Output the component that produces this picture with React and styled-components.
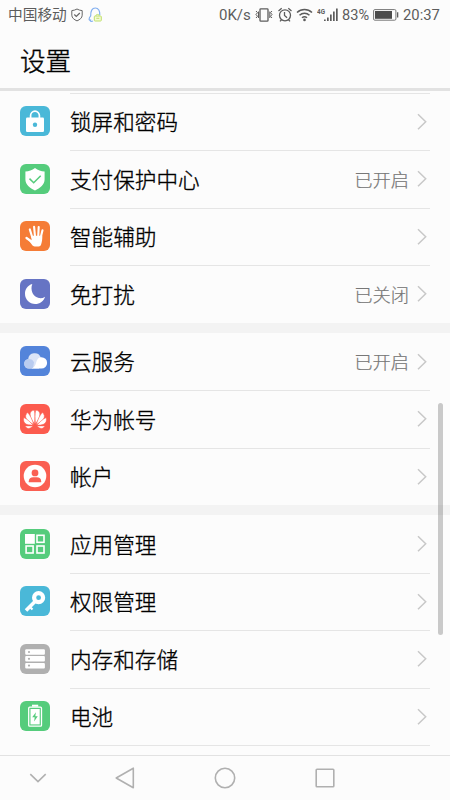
import React from 'react'
import styled, {createGlobalStyle} from 'styled-components'

const GlobalStyle = createGlobalStyle`
  * {
    box-sizing: border-box;
  }
  body {
    margin: 0;
    background: #fcfcfc;
    font-family: Roboto, 'Noto Sans CJK SC', sans-serif;
  }
  svg {
    display: block;
    flex-shrink: 0;
  }
`

const Screen = styled.div`
  position: relative;
  display: flex;
  flex-direction: column;
  width: 450px;
  height: 800px;
  overflow: hidden;
  background: #fcfcfc;
`

const StatusBar = styled.div`
  display: flex;
  align-items: center;
  justify-content: space-between;
  height: 31px;
  padding: 0 10px 1px 8px;
  color: #5c5c5c;
`

const StatusGroup = styled.div`
  display: flex;
  align-items: center;
  gap: ${props => props.$gap}px;
`

const StatusText = styled.span`
  width: ${props => props.$width}px;
  font-size: ${props => props.$size || 14.5}px;
  line-height: 30px;
  white-space: nowrap;
`

const Signal = styled.div`
  display: flex;
  margin: 0 -1px 0 0;
`

const Title = styled.h1`
  height: 57px;
  margin: 0;
  padding-left: 20px;
  border-bottom: 3px solid #e2e2e2;
  box-sizing: content-box;
  font-size: 25.6px;
  font-weight: 300;
  line-height: 62px;
  color: #000;
  -webkit-text-stroke: 0.4px #000;
`

const List = styled.div`
  display: flex;
  flex-direction: column;
  gap: 10px;
  height: 664px;
  padding-top: 1.5px;
  overflow: hidden;
  background: #fcfcfc;
`

const Group = styled.div`
  flex-shrink: 0;
  & + & {
    box-shadow: 0 -10px 0 #f3f3f3;
  }
`

const Row = styled.div`
  display: flex;
  align-items: center;
  height: 57.5px;
  padding-left: 20px;
`

const RowBody = styled.div`
  display: flex;
  flex: 1;
  align-items: center;
  height: 100%;
  margin: 0 20px;
  padding-right: 3px;
  border-top: 1px solid ${props => props.$line ? '#e5e5e5' : 'transparent'};
`

const Label = styled.span`
  flex: 1;
  padding-top: 3px;
  font-size: 21.6px;
  font-weight: 300;
  line-height: 32px;
  color: #000;
  -webkit-text-stroke: 0.35px #000;
`

const Value = styled.span`
  margin-right: 8px;
  padding-top: 3px;
  font-size: 18.3px;
  font-weight: 300;
  line-height: 28px;
  color: #777;
  -webkit-text-stroke: 0.2px #777;
`

const Tile = styled.div`
  width: 30px;
  height: 30px;
  border-radius: 6px;
  background: ${props => props.$color};
`

const Scrollbar = styled.div`
  position: absolute;
  top: 403px;
  right: 7.5px;
  width: 5px;
  height: 232px;
  border-radius: 3px;
  background: rgba(0, 0, 0, 0.2);
`

const NavBar = styled.div`
  display: grid;
  grid-template-columns: 75px 100px 100px 100px;
  align-items: center;
  justify-items: center;
  height: 45px;
  border-top: 1px solid #e2e2e2;
  background: #fcfcfc;
`

const icons = {
  lock: (
    <g>
      <path d="M10.6 12V9.6a4.4 4.4 0 0 1 8.8 0V12" fill="none" stroke="#fff" strokeWidth="1.7" />
      <rect x="6" y="11.6" width="18" height="14.4" rx="1.2" fill="#fff" />
      <circle cx="15" cy="18.7" r="2.2" fill="#4ab8d8" />
    </g>
  ),
  shield: (
    <g>
      <path d="M15 4c3 2.4 6 3.3 9.6 3.6v7.8c0 5-4.4 8.6-9.6 11-5.2-2.4-9.6-6-9.6-11V7.600C9 7.300 12 6.400 15 4z" fill="#fff" />
      <path d="M9.500 14.600l4.200 4.200 7-7" fill="none" stroke="#55cc7c" strokeWidth="1.500" />
    </g>
  ),
  hand: (
    <g stroke="#fff" strokeLinecap="round" fill="none">
      <path d="M12.300 16.500L9.800 8.400M15 15.500L14.100 5.900M18.200 15.500L18.700 6M20.600 17L22.500 9.200" strokeWidth="2.100" />
      <path d="M12.500 21.200L6.500 17" strokeWidth="2.300" />
      <path d="M11.300 14.700h11c.1 3.500-.3 6.300-1.200 8.800-.4 1.300-1.100 1.900-2.500 1.900h-3.800c-1.500 0-2.300-.8-3.200-2.100L8.400 19l3.200.4z" fill="#fff" stroke="none" />
    </g>
  ),
  moon: (
    <path d="M12.300 5.100C7.600 6.400 5 10.400 5 14.800 5 20.700 9.500 25 15.200 25c4.600 0 8.600-2.800 9.900-7.300-2 1.300-4.100 1.800-6.200 1.400-5.800-1-9-8-6.600-14z" fill="#fff" />
  ),
  cloud: (
    <g>
      <path d="M9 22.600a4.800 4.800 0 0 1-.8-9.500 6.500 6.500 0 0 1 12.600-1.600L19 22.600z" fill="#dbe5f7" />
      <path d="M8.700 13c2.800 0 4.400 1.200 5.300 3.300l-1 6.300H9A4.800 4.800 0 0 1 8.700 13z" fill="#b9ccf0" />
      <path d="M11.500 22.600c3.200-1.200 4-3.300 4.700-6.300.7-3.200 2.700-5.100 5.200-5.100a5.700 5.700 0 0 1 0 11.400z" fill="#fff" />
    </g>
  ),
  huawei: (
    <g fill="#fff" stroke="#fc5b4e" strokeWidth=".5">
      {[false, true].map(flip => (
        <g key={String(flip)} transform={flip ? 'translate(30 0) scale(-1 1)' : undefined}>
          <path d="M14.500 19.800C15 14 15.200 10 14.300 6.300 11.500 6.300 9.800 8.200 10.200 11c.3 2.900 2 5.800 4.300 8.800z" />
          <path d="M13.700 20.400C12.300 15.800 10.300 11.600 7.800 8.600 5.400 10.200 5 12.700 6.500 15c1.500 2.300 4.200 3.800 7.200 5.400z" />
          <path d="M13.200 21.200C10.300 18.100 7.400 15.300 3.900 13.500c-1 2.900.1 5.700 2.700 6.800 1.900.7 4.100.9 6.600.9z" />
          <path d="M12.900 22c-2.600-.2-5-.1-7.900 0 1.400 2.300 3.400 3 5.300 2 1.100-.5 1.900-1.200 2.600-2z" />
        </g>
      ))}
    </g>
  ),
  account: (
    <g>
      <circle cx="15" cy="15" r="11.300" fill="#fff" />
      <circle cx="15" cy="11.900" r="3.400" fill="#fa5f52" />
      <path d="M8.800 21.200v-1c0-2.800 1.900-4 4.300-4h3.800c2.400 0 4.300 1.200 4.300 4v1z" fill="#fa5f52" />
    </g>
  ),
  apps: (
    <g fill="none" stroke="#fff" strokeWidth="1.600">
      <rect x="5.800" y="5.800" width="8.200" height="8.200" fill="#fff" />
      <rect x="17" y="6.300" width="7" height="7" />
      <rect x="6.100" y="17" width="7" height="7" />
      <rect x="17" y="17" width="7" height="7" />
    </g>
  ),
  key: (
    <g fill="none" stroke="#fff">
      <circle cx="18.600" cy="11.700" r="4.500" strokeWidth="4.200" />
      <path d="M15 15.500L6 24.500" strokeWidth="3.600" />
      <path d="M9.500 20.500l3 3" strokeWidth="2.200" />
    </g>
  ),
  storage: (
    <g>
      {[5.3, 12.1, 18.900].map(y => (
        <g key={y}>
          <rect x="5.200" y={y} width="19.700" height="5.500" rx="1" fill="#fff" />
          <circle cx="9" cy={y + 2.7} r="1.100" fill="#b0b0b0" />
        </g>
      ))}
    </g>
  ),
  battery: (
    <g>
      <path d="M12 3.700h6.200v2h-6.200z" fill="#fff" />
      <rect x="8.700" y="6.200" width="12.800" height="19" rx="1" fill="none" stroke="#fff" strokeWidth="1.300" />
      <rect x="10.500" y="8" width="9.200" height="15.400" fill="#fff" />
      <path d="M15.900 11.300l-3.700 5h2.500l-.6 4.200 3.700-5.300h-2.500z" fill="#55cc7c" />
    </g>
  )
}

const groups = [
  [
    {label: '锁屏和密码', icon: 'lock', color: '#4ab8d8', line: true},
    {label: '支付保护中心', icon: 'shield', color: '#55cc7c', value: '已开启'},
    {label: '智能辅助', icon: 'hand', color: '#f57c36'},
    {label: '免打扰', icon: 'moon', color: '#6674c4', value: '已关闭'}
  ],
  [
    {label: '云服务', icon: 'cloud', color: '#5384da', value: '已开启'},
    {label: '华为帐号', icon: 'huawei', color: '#fc5b4e'},
    {label: '帐户', icon: 'account', color: '#fa5f52'}
  ],
  [
    {label: '应用管理', icon: 'apps', color: '#55cc7c'},
    {label: '权限管理', icon: 'key', color: '#4ab8d8'},
    {label: '内存和存储', icon: 'storage', color: '#b0b0b0'},
    {label: '电池', icon: 'battery', color: '#55cc7c'}
  ]
]

const Chevron = () => (
  <svg width="10" height="18" viewBox="0 0 10 18" fill="none" stroke="#c8c8c8" strokeWidth="1.500">
    <path d="M1 1.200L8.700 8.700 1 16.200" />
  </svg>
)

const Item = ({item, line}) => (
  <Row>
    <Tile $color={item.color}>
      <svg width="30" height="30" viewBox="0 0 30 30">{icons[item.icon]}</svg>
    </Tile>
    <RowBody $line={line}>
      <Label>{item.label}</Label>
      {item.value && <Value>{item.value}</Value>}
      <Chevron />
    </RowBody>
  </Row>
)

const Status = () => (
  <StatusBar>
    <StatusGroup $gap={4}>
      <StatusText $width={59} $size={14.7}>中国移动</StatusText>
      <svg width="12" height="14" viewBox="0 0 12 14" fill="none" stroke="#666" strokeWidth="1">
        <path d="M6 1c1.700 1 3.200 1.400 5.200 1.600v4.600c0 2.700-2.300 4.400-5.200 5.700C3.100 11.600.8 9.900.8 7.200V2.600C2.800 2.400 4.300 2 6 1z" />
        <path d="M3.300 6.500l2 2 3.500-3.500" strokeWidth="1.200" />
      </svg>
      <svg width="15" height="16" viewBox="0 0 15 16" fill="none">
        <path d="M6 14c-1.500.6-3 .3-2.600-.9-1.500.5-2-1.700.3-4.200C3.500 4 5.100 1 8.300 1s4.700 2.900 4.500 7" stroke="#82aff0" strokeWidth="1.200" />
        <rect x="7.300" y="9" width="7" height="5" rx=".8" fill="#f5f9d5" stroke="#bfe06c" />
        <path d="M8.800 8.800c0-1.800 3.500-1.800 3.500 0M9.300 11.300h3" stroke="#bfe06c" />
      </svg>
    </StatusGroup>
    <StatusGroup $gap={4}>
      <StatusText $width={32} $size={15}>0K/s</StatusText>
      <svg width="18" height="16" viewBox="0 0 18 16" fill="none" stroke="#5c5c5c" strokeWidth="1.300">
        <rect x="5" y="1.800" width="8" height="12.400" rx=".8" />
        <path d="M1 4l1.500 1.700L1 7.500l1.500 1.800L1 11M3.500 4.500V11M17 4l-1.500 1.700L17 7.500l-1.500 1.800L17 11M14.800 4.500V11" strokeWidth="1" />
      </svg>
      <svg width="15" height="16" viewBox="0 0 15 16" fill="none" stroke="#5c5c5c" strokeWidth="1.300">
        <circle cx="8" cy="8.300" r="5.500" />
        <path d="M1.500 4L4.700 1.300M14.500 4L11.300 1.300M4.500 12.800L3 14.400M11.500 12.800l1.500 1.600M7.500 5.100v3.400l2.600 2.200" />
      </svg>
      <svg width="17" height="14" viewBox="0 0 17 14" fill="none" stroke="#5c5c5c" strokeWidth="1.500">
        <path d="M1 4.500c4.300-4.100 10.700-4.100 15 0M3.500 7.200c2.900-2.700 7.100-2.700 10 0M6 9.800c1.500-1.300 3.500-1.300 5 0" />
        <circle cx="8.500" cy="11.900" r="1.300" fill="#5c5c5c" stroke="none" />
      </svg>
      <Signal>
        <svg width="22" height="16" viewBox="1 0 22 16" fill="#5c5c5c">
          <text x="1" y="6.500" fontSize="7.500" fontWeight="700" textLength="8" lengthAdjust="spacingAndGlyphs">4G</text>
          <path d="M8 12.500h1.700V14H8zM11 10.500h1.700V14H11zM14 7.500h1.700V14H14zM17 4.500h1.700V14H17zM20 1.500h1.700V14H20z" />
        </svg>
      </Signal>
      <StatusText $width={27} $size={14.6}>83%</StatusText>
      <svg width="26" height="12" viewBox="0 0 26 12">
        <rect x=".6" y=".6" width="22.300" height="10.600" rx="1.200" fill="none" stroke="#777" strokeWidth="1" />
        <rect x="2" y="2" width="17" height="7.800" fill="#4c4c4c" />
        <path d="M24 3.200h1.300v5.400H24z" fill="#5c5c5c" />
      </svg>
      <StatusText $width={37} $size={14.8}>20:37</StatusText>
    </StatusGroup>
  </StatusBar>
)

const App = () => (
  <Screen>
    <GlobalStyle />
    <Status />
    <Title>设置</Title>
    <List>
      {groups.map((items, g) => (
        <Group key={g}>
          {items.map((item, i) => (
            <Item key={item.label} item={item} line={item.line || i > 0} />
          ))}
          {g === groups.length - 1 && (
            <Row>
              <Tile $color="transparent" />
              <RowBody $line />
            </Row>
          )}
        </Group>
      ))}
    </List>
    <Scrollbar />
    <NavBar>
      <svg width="18" height="10" viewBox="0 0 18 10" fill="none" stroke="#b0b0b0" strokeWidth="1.600">
        <path d="M1.300 1.200L9 8.600l7.700-7.400" />
      </svg>
      <svg width="20" height="22" viewBox="0 0 20 22" fill="none" stroke="#b0b0b0" strokeWidth="1.600" strokeLinejoin="round">
        <path d="M18.300 1.200v19.600L1.200 11z" />
      </svg>
      <svg width="22" height="22" viewBox="0 0 22 22" fill="none" stroke="#b0b0b0" strokeWidth="1.600">
        <circle cx="11" cy="11" r="9.700" />
      </svg>
      <svg width="20" height="20" viewBox="0 0 20 20" fill="none" stroke="#b0b0b0" strokeWidth="1.600">
        <rect x="1.200" y="1.200" width="17.600" height="17.600" rx=".8" />
      </svg>
    </NavBar>
  </Screen>
)

export default App
